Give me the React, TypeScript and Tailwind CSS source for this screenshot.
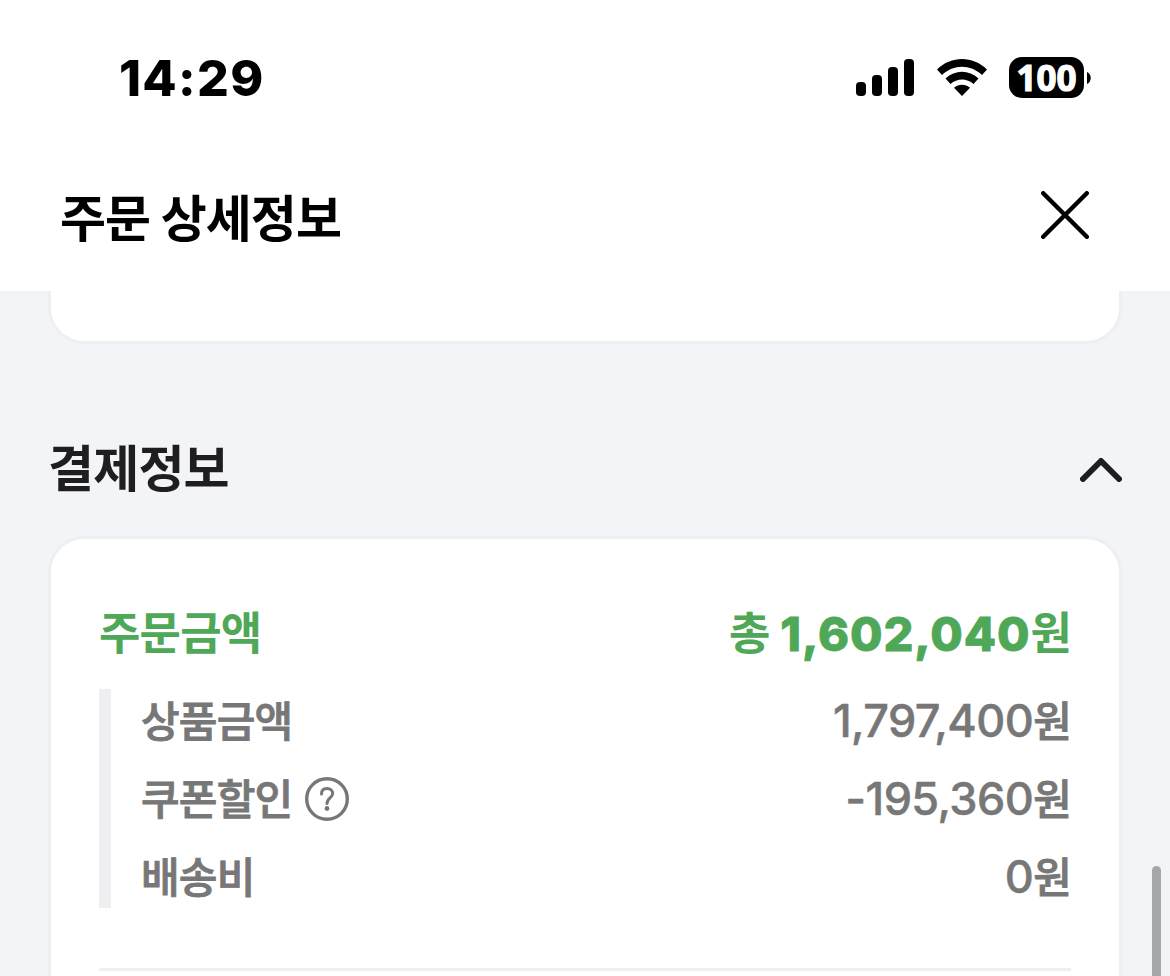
import type { ReactNode } from 'react';

type AmountProps = {
  value: string;
};

type PriceRowProps = AmountProps & {
  label: string;
  children?: ReactNode;
};

const SignalIcon = () => (
  <svg viewBox="0 0 58 37" className="h-[37px] w-[58px]" fill="currentColor">
    <rect x="0" y="23" width="10" height="14" rx="4" />
    <rect x="16" y="16" width="10" height="21" rx="4" />
    <rect x="32" y="8" width="10" height="29" rx="4" />
    <rect x="48" y="0" width="10" height="37" rx="4" />
  </svg>
);

const WifiIcon = () => (
  <svg viewBox="0 0 50 37" className="h-[37px] w-[50px]" fill="currentColor">
    <path d="M0 10.500C14-3.500 36-3.500 50 10.500L45 16C33.500 5 16.500 5 5 16Z" />
    <path d="M8.500 19.500C18 10.500 32 10.500 41.500 19.500L36.500 25C30 19 20 19 13.500 25Z" />
    <path d="M17 28.800C21.500 24.700 28.500 24.700 33 28.800L25 37Z" />
  </svg>
);

const BatteryIcon = () => (
  <div className="flex items-center gap-[3px]">
    <div className="flex h-[41px] w-[75px] items-center justify-center rounded-[13px] bg-black">
      <span className="pb-px font-['Open_Sans'] text-[35px] leading-none font-bold text-white [-webkit-text-stroke:1.2px]">
        100
      </span>
    </div>
    <svg viewBox="0 0 4 12" className="h-3 w-1" fill="currentColor">
      <path d="M0 0C5 2 5 10 0 12Z" />
    </svg>
  </div>
);

const CloseIcon = () => (
  <svg viewBox="0 0 48 48" className="size-12" fill="none" stroke="currentColor" strokeWidth="4.4" strokeLinecap="round">
    <path d="M2.200 2.200 45.800 45.800M45.800 2.200 2.200 45.800" />
  </svg>
);

const ChevronUpIcon = () => (
  <svg
    viewBox="0 0 42 24"
    className="mt-[2px] h-6 w-[42px]"
    fill="none"
    stroke="currentColor"
    strokeWidth="6"
    strokeLinecap="round"
    strokeLinejoin="round"
  >
    <path d="M3 21 21 3 39 21" />
  </svg>
);

const HelpIcon = () => (
  <svg viewBox="0 0 44 44" className="size-11" fill="none" stroke="currentColor">
    <circle cx="22" cy="22" r="20.300" strokeWidth="3.400" />
    <path
      d="M16.500 17C16.500 13.500 18.700 11.500 22 11.500C25.300 11.500 27.700 13.500 27.700 16.500C27.700 21 22 21 22 26.500"
      strokeWidth="3"
      strokeLinecap="round"
    />
    <circle cx="22" cy="31.500" r="2.400" fill="currentColor" stroke="none" />
  </svg>
);

const Amount = ({ value }: AmountProps) => (
  <div className="flex items-center">
    <span className="font-['Inter'] text-[45px] font-medium tracking-[-0.6px] [-webkit-text-stroke:0.5px]">{value}</span>
    <span className="pb-[4px] text-[42px] tracking-[-0.8px] [-webkit-text-stroke:0.9px]">원</span>
  </div>
);

const PriceRow = ({ label, value, children }: PriceRowProps) => (
  <div className="flex h-[63px] items-center justify-between">
    <div className="flex items-center gap-[13px]">
      <span className="pb-[4px] text-[42px] tracking-[-0.8px] [-webkit-text-stroke:0.9px]">{label}</span>
      {children}
    </div>
    <Amount value={value} />
  </div>
);

export default function App() {
  return (
    <div className="relative flex h-[976px] w-[1170px] flex-col overflow-hidden bg-[#f3f4f7] font-['Noto_Sans_CJK_KR',sans-serif] leading-none font-medium text-black">
      <header className="h-[291px] shrink-0 bg-white">
        <div className="flex h-[155px] items-center justify-between pr-[79px] pl-[119px]">
          <span className="font-['Inter'] text-[50px] font-extrabold tracking-[1.3px]">14:29</span>
          <div className="flex items-center gap-[22px]">
            <div className="flex items-center gap-[23px]">
              <SignalIcon />
              <WifiIcon />
            </div>
            <BatteryIcon />
          </div>
        </div>
        <div className="flex h-[120px] items-center justify-between pr-[81px] pl-[60px]">
          <h1 className="text-[50px] font-bold tracking-[-0.9px]">주문 상세정보</h1>
          <button aria-label="닫기">
            <CloseIcon />
          </button>
        </div>
      </header>

      <main className="flex grow flex-col px-12">
        <div className="h-[53px] shrink-0 rounded-b-[36px] border-3 border-t-0 border-[#eeeff1] bg-white" />

        <section className="flex grow flex-col">
          <div className="mt-[93px] flex h-[64px] shrink-0 items-center justify-between text-[#1d1d22]">
            <h2 className="pb-[8px] text-[50px] font-bold tracking-[-0.8px]">결제정보</h2>
            <ChevronUpIcon />
          </div>

          <div className="mt-[35px] grow rounded-t-[36px] border-3 border-b-0 border-[#eeeff1] bg-white px-12 pt-[60px]">
            <div className="flex h-[70px] items-center justify-between text-[#4fa758]">
              <span className="pb-[7px] text-[45px] font-bold tracking-[-0.8px]">주문금액</span>
              <div className="flex items-center">
                <span className="pb-[7px] text-[45px] font-bold">총</span>
                <span className="ml-[10px] pb-[2px] font-['Inter'] text-[47px] font-extrabold tracking-[0.9px] [-webkit-text-stroke:0.8px]">
                  1,602,040
                </span>
                <span className="pb-[7px] text-[45px] font-bold tracking-[-0.8px]">원</span>
              </div>
            </div>

            <div className="mt-5 flex h-[219px] flex-col justify-between border-l-12 border-[#eeeff1] pl-[30px] text-[#777777]">
              <PriceRow label="상품금액" value="1,797,400" />
              <PriceRow label="쿠폰할인" value="-195,360">
                <HelpIcon />
              </PriceRow>
              <PriceRow label="배송비" value="0" />
            </div>

            <hr className="mt-[60px] border-t-3 border-[#eeeff1]" />
          </div>
        </section>
      </main>

      {/* scroll thumb */}
      <div className="absolute top-[866px] right-[9px] h-[200px] w-[9px] rounded-full bg-[#a6a7a9]" />
    </div>
  );
}
